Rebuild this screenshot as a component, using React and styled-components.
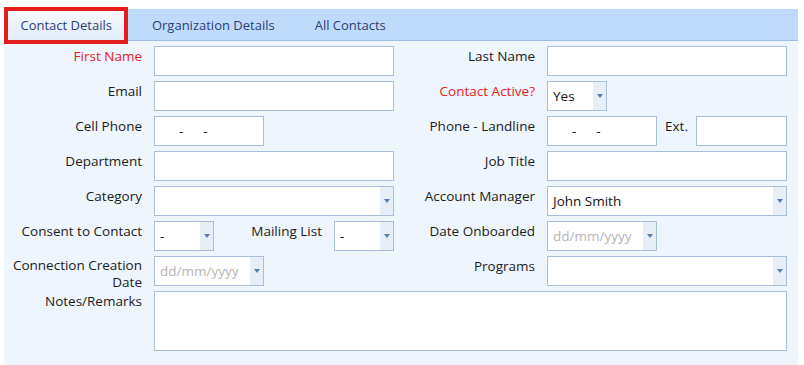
import styled, { createGlobalStyle } from 'styled-components'

const GlobalStyle = createGlobalStyle`
    body {
        margin: 0;
        background: #ffffff;
        font-family: "Open Sans", "Noto Sans", sans-serif;
    }
`

const Panel = styled.div`
    margin: 9px 6px 0 4px;
    background: #eef5fd;
    height: 356px;
`

const TabBar = styled.div`
    display: flex;
    gap: 15px;
    height: 32px;
    padding-left: 4px;
    background: #bfdbfc;
    border-bottom: 1px solid #9dbde6;
    box-sizing: border-box;
`

const Tab = styled.div`
    display: flex;
    align-items: center;
    margin-top: 2px;
    padding: 0 12.5px 1px;
    font-size: 13px;
    color: #2b3f78;
    cursor: pointer;

    ${p => p.$active && `
        background: linear-gradient(#f6f9fe, #e2ebf8);
        outline: 4px solid #e31c1c;
    `}
`

const Form = styled.div`
    display: grid;
    grid-template-columns: 138px 240px 129px 240px;
    grid-auto-rows: 30px;
    column-gap: 12px;
    row-gap: 5px;
    padding: 5px 0 0;
`

const Label = styled.div`
    text-align: right;
    font-size: 13.5px;
    line-height: 19px;
    padding-top: 1px;
    color: ${p => (p.$required ? '#e8201c' : '#1c1c1c')};
    white-space: nowrap;
`

const WrapLabel = styled(Label)`
    white-space: normal;
    line-height: 17px;
`

const Box = styled.div`
    box-sizing: border-box;
    height: 30px;
    width: ${p => p.$width || '100%'};
    border: 1px solid #a9bedc;
    background: #ffffff;
    display: flex;
    align-items: center;
    font-size: 13.5px;
    color: #111;
`

const Notes = styled(Box)`
    grid-column: 2 / 5;
    grid-row: span 2;
    height: 60px;
`

const Value = styled.span`
    flex: 1;
    padding-left: 5px;
    color: ${p => (p.$placeholder ? '#b5b5b5' : '#111')};
`

const Arrow = styled.span`
    width: 13px;
    align-self: stretch;
    background: #e8eef8;
    display: flex;
    align-items: center;
    justify-content: center;

    &::after {
        content: '';
        border-left: 3.5px solid transparent;
        border-right: 3.5px solid transparent;
        border-top: 4px solid #5b7db5;
    }
`

const Mask = styled.span`
    display: flex;
    gap: 20px;
    padding-left: 24px;
`

const Pair = styled.div`
    display: grid;
    grid-template-columns: ${p => p.$cols};
    align-items: start;
`

const SubLabel = styled(Label)`
    text-align: ${p => p.$align || 'right'};
    padding-right: ${p => (p.$align === 'left' ? 0 : '12px')};
    padding-left: ${p => (p.$align === 'left' ? '8px' : 0)};
`

function Select({ value, placeholder, width }) {
    return (
        <Box $width={width}>
            <Value $placeholder={!value}>{value || placeholder}</Value>
            <Arrow />
        </Box>
    )
}

function Phone({ width }) {
    return (
        <Box $width={width}>
            <Mask><span>-</span><span>-</span></Mask>
        </Box>
    )
}

export default function App() {
    return (
        <>
            <GlobalStyle />
            <Panel>
                <TabBar>
                    <Tab $active>Contact Details</Tab>
                    <Tab>Organization Details</Tab>
                    <Tab>All Contacts</Tab>
                </TabBar>
                <Form>
                    <Label $required>First Name</Label>
                    <Box />
                    <Label>Last Name</Label>
                    <Box />

                    <Label>Email</Label>
                    <Box />
                    <Label $required>Contact Active?</Label>
                    <Select value="Yes" width="60px" />

                    <Label>Cell Phone</Label>
                    <Phone width="110px" />
                    <Label>Phone - Landline</Label>
                    <Pair $cols="110px 1fr 91px">
                        <Phone />
                        <SubLabel $align="left">Ext.</SubLabel>
                        <Box />
                    </Pair>

                    <Label>Department</Label>
                    <Box />
                    <Label>Job Title</Label>
                    <Box />

                    <Label>Category</Label>
                    <Select />
                    <Label>Account Manager</Label>
                    <Select value="John Smith" />

                    <Label>Consent to Contact</Label>
                    <Pair $cols="60px 1fr 60px">
                        <Select value="-" />
                        <SubLabel>Mailing List</SubLabel>
                        <Select value="-" />
                    </Pair>
                    <Label>Date Onboarded</Label>
                    <Select placeholder="dd/mm/yyyy" width="110px" />

                    <WrapLabel>Connection Creation Date</WrapLabel>
                    <Select placeholder="dd/mm/yyyy" width="110px" />
                    <Label>Programs</Label>
                    <Select />

                    <Label>Notes/Remarks</Label>
                    <Notes />
                </Form>
            </Panel>
        </>
    )
}
